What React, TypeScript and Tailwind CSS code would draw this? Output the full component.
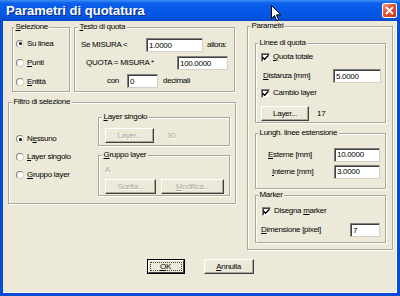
import React from 'react';

const U = ({ children }: { children: React.ReactNode }) => (
  <span className="underline decoration-1 underline-offset-[1px]">{children}</span>
);

const Group = ({
  label,
  className = '',
  labelLeft = 'left-[3px]',
  children,
}: {
  label: React.ReactNode;
  className?: string;
  labelLeft?: string;
  children?: React.ReactNode;
}) => (
  <div className={`relative border border-[#ACA899] shadow-[inset_1px_1px_0_#fff,1px_1px_0_#fff] ${className}`}>
    <span className={`absolute -top-[6px] ${labelLeft} bg-[#ECE9D8] px-[1.5px] leading-[10px] whitespace-nowrap`}>{label}</span>
    {children}
  </div>
);

const Radio = ({ checked, children }: { checked?: boolean; children: React.ReactNode }) => (
  <div className="flex items-center gap-[3px] whitespace-nowrap">
    <span className="w-[8px] h-[8px] rounded-full border border-[#808080] border-b-[#d4d0c8] border-r-[#d4d0c8] bg-white flex items-center justify-center">
      {checked && <span className="w-[3px] h-[3px] rounded-full bg-black" />}
    </span>
    <span>{children}</span>
  </div>
);

const Check = ({ children }: { children: React.ReactNode }) => (
  <div className="flex items-center gap-[3px] whitespace-nowrap">
    <span className="w-[9px] h-[9px] border border-[#808080] border-b-[#e8e6dc] border-r-[#e8e6dc] bg-white flex items-center justify-center shadow-[inset_1px_1px_0_#404040]">
      <svg width="7" height="7" viewBox="0 0 7 7">
        <path d="M0.5 3.2 L2.6 5.3 L6.5 1.2" stroke="#000" strokeWidth="1.4" fill="none" />
      </svg>
    </span>
    <span>{children}</span>
  </div>
);

const Field = ({ value, className = '' }: { value: string; className?: string }) => (
  <input
    readOnly
    value={value}
    className={`h-[14px] bg-white border border-[#808080] border-b-[#d4d0c8] border-r-[#d4d0c8] shadow-[inset_1px_1px_0_#404040] pl-[2px] text-[8px] tracking-[-0.3px] leading-none outline-none ${className}`}
  />
);

const Btn = ({
  children,
  disabled,
  className = '',
}: {
  children: React.ReactNode;
  disabled?: boolean;
  className?: string;
}) => (
  <button
    className={`h-[15px] bg-[#ECE9D8] border border-t-white border-l-white border-r-[#404040] border-b-[#404040] shadow-[inset_-1px_-1px_0_#ACA899] flex items-center justify-center leading-none ${
      disabled ? 'text-[#ACA899] [text-shadow:1px_1px_0_#fff]' : 'text-black'
    } ${className}`}
  >
    {children}
  </button>
);

export default function App() {
  return (
    <div className="relative w-[400px] h-[296px] flex flex-col overflow-hidden bg-[#0A4AD8] font-['Liberation_Sans',Arial,sans-serif] text-[8px] tracking-[-0.3px] text-black select-none">
      {/* title bar */}
      <div className="h-[21px] flex items-center justify-between pl-[6px] pr-[3px] bg-[linear-gradient(to_bottom,#3C8EF6_0%,#0B5FEA_15%,#0559E9_50%,#0654DD_85%,#0A48C9_100%)]">
        <span className="text-white font-bold text-[13px] tracking-normal [text-shadow:1px_1px_0_#0A2A8A]">Parametri di quotatura</span>
        <span className="w-[15px] h-[15px] rounded-[2px] border border-white bg-[linear-gradient(135deg,#F39A7E_0%,#E2512F_45%,#C8391B_100%)] flex items-center justify-center">
          <svg width="9" height="9" viewBox="0 0 9 9">
            <path d="M1 1 L8 8 M8 1 L1 8" stroke="#fff" strokeWidth="1.8" />
          </svg>
        </span>
      </div>

      {/* cursor */}
      <svg className="absolute left-[271px] top-[5px]" width="11" height="17" viewBox="0 0 11 17">
        <path d="M0.5 0.5 L0.5 13.5 L3.5 10.5 L5.7 15.8 L7.6 15 L5.5 9.8 L9.8 9.8 Z" fill="#fff" stroke="#000" strokeWidth="1" />
      </svg>

      {/* body */}
      <div className="flex-1 mx-[3px] mb-[3px] bg-[#ECE9D8] flex flex-col shadow-[inset_-1px_-1px_0_#fff]">
        <div className="flex items-start pt-[6px]">
          {/* left column */}
          <div className="ml-[5px] w-[228px] flex flex-col">
            <div className="flex pl-[4px] gap-[4px]">
              <Group label={<><U>S</U>elezione</>} labelLeft="left-[1px]" className="w-[58px] h-[65px]">
                <div className="flex flex-col pt-[6px] pl-[3px]">
                  <div className="h-[19px] flex items-center"><Radio checked>Su linea</Radio></div>
                  <div className="h-[19px] flex items-center"><Radio><U>P</U>unti</Radio></div>
                  <div className="h-[19px] flex items-center"><Radio><U>E</U>ntità</Radio></div>
                </div>
              </Group>
              <Group label={<><U>T</U>esto di quota</>} className="w-[161px] h-[65px]">
                <div className="flex flex-col pt-[8px]">
                  <div className="h-[18px] flex items-center pl-[6px]">
                    <span className="w-[65px]">Se MISURA &lt;</span>
                    <Field value="1.0000" className="w-[57px]" />
                    <span className="ml-[4px]">allora:</span>
                  </div>
                  <div className="h-[18px] flex items-center pl-[11px]">
                    <span className="w-[91px]">QUOTA = MISURA *</span>
                    <Field value="100.0000" className="w-[51px]" />
                  </div>
                  <div className="h-[18px] flex items-center pl-[32px]">
                    <span className="w-[20px]">con</span>
                    <Field value="0" className="w-[31px]" />
                    <span className="ml-[5px]">decimali</span>
                  </div>
                </div>
              </Group>
            </div>

            <Group label="Filtro di selezione" className="mt-[10px] w-[228px] h-[102px]">
              <div className="flex">
                <div className="w-[89px] flex flex-col pt-[27px] pl-[7px]">
                  <div className="h-[18px] flex items-center"><Radio checked>N<U>e</U>ssuno</Radio></div>
                  <div className="h-[18px] flex items-center"><Radio><U>L</U>ayer singolo</Radio></div>
                  <div className="h-[18px] flex items-center"><Radio><U>G</U>ruppo layer</Radio></div>
                </div>
                <div className="flex flex-col pt-[14px]">
                  <Group label={<><U>L</U>ayer singolo</>} className="w-[132px] h-[29px]">
                    <div className="flex items-center pl-[6px] pt-[10px]">
                      <Btn disabled className="w-[49px]">Layer...</Btn>
                      <span className="ml-[13px] text-[#ACA899] [text-shadow:1px_1px_0_#fff]">30</span>
                    </div>
                  </Group>
                  <Group label={<><U>G</U>ruppo layer</>} className="mt-[9px] w-[132px] h-[41px]">
                    <div className="flex flex-col pl-[6px] pt-[8px]">
                      <div className="h-[12px] flex items-center text-[#ACA899] [text-shadow:1px_1px_0_#fff]">A</div>
                      <div className="flex gap-[5px] mt-[3px]">
                        <Btn disabled className="w-[51px]">Scelta...</Btn>
                        <Btn disabled className="w-[63px]"><U>M</U>odifica...</Btn>
                      </div>
                    </div>
                  </Group>
                </div>
              </div>
            </Group>
          </div>

          {/* right column */}
          <Group label="Parametri" labelLeft="left-[2px]" className="ml-[11px] -mt-px w-[146px] h-[224px]">
            <div className="flex flex-col pl-[7px] pt-[16px]">
              <Group label="Linee di quota" labelLeft="left-[2px]" className="w-[131px] h-[80px]">
                <div className="flex flex-col">
                  <div className="mt-[5px] h-[16px] flex items-center pl-[5px]"><Check><U>Q</U>uota totale</Check></div>
                  <div className="mt-[2px] h-[18px] flex items-center pl-[7px]">
                    <span className="w-[70px]"><U>D</U>istanza [mm]</span>
                    <Field value="5.0000" className="w-[48px]" />
                  </div>
                  <div className="h-[16px] flex items-center pl-[5px]"><Check>Cambio layer</Check></div>
                  <div className="mt-[5px] flex items-center pl-[5px]">
                    <Btn className="w-[48px] h-[14px]">Layer...</Btn>
                    <span className="ml-[8px]">17</span>
                  </div>
                </div>
              </Group>
              <Group label="Lungh. linee estensione" labelLeft="left-[2px]" className="mt-[10px] w-[131px] h-[56px]">
                <div className="flex flex-col pt-[12px]">
                  <div className="h-[17px] flex items-center pl-[12px]">
                    <span className="w-[66px]"><U>E</U>sterne [mm]</span>
                    <Field value="10.0000" className="w-[46px]" />
                  </div>
                  <div className="h-[17px] flex items-center pl-[16px]">
                    <span className="w-[62px]"><U>I</U>nterne [mm]</span>
                    <Field value="3.0000" className="w-[46px]" />
                  </div>
                </div>
              </Group>
              <Group label="Marker" labelLeft="left-[2px]" className="mt-[6px] w-[131px] h-[48px]">
                <div className="flex flex-col pt-[7px]">
                  <div className="h-[16px] flex items-center pl-[6px]"><Check>Disegna <U>m</U>arker</Check></div>
                  <div className="mt-[2px] h-[18px] flex items-center pl-[5px]">
                    <span className="w-[89px]"><U>D</U>imensione [pixel]</span>
                    <Field value="7" className="w-[30px]" />
                  </div>
                </div>
              </Group>
            </div>
          </Group>
        </div>

        {/* buttons */}
        <div className="mt-[9px] flex justify-center gap-[19px]">
          <div className="w-[38px] h-[15px] border border-black flex">
            <div className="flex-1 bg-[#ECE9D8] border border-t-white border-l-white border-r-[#404040] border-b-[#404040] flex items-center justify-center p-[1px]">
              <span className="w-full h-full border border-dotted border-[#404040] flex items-center justify-center leading-none"><U>O</U>K</span>
            </div>
          </div>
          <Btn className="w-[50px]"><U>A</U>nnulla</Btn>
        </div>
      </div>
    </div>
  );
}
